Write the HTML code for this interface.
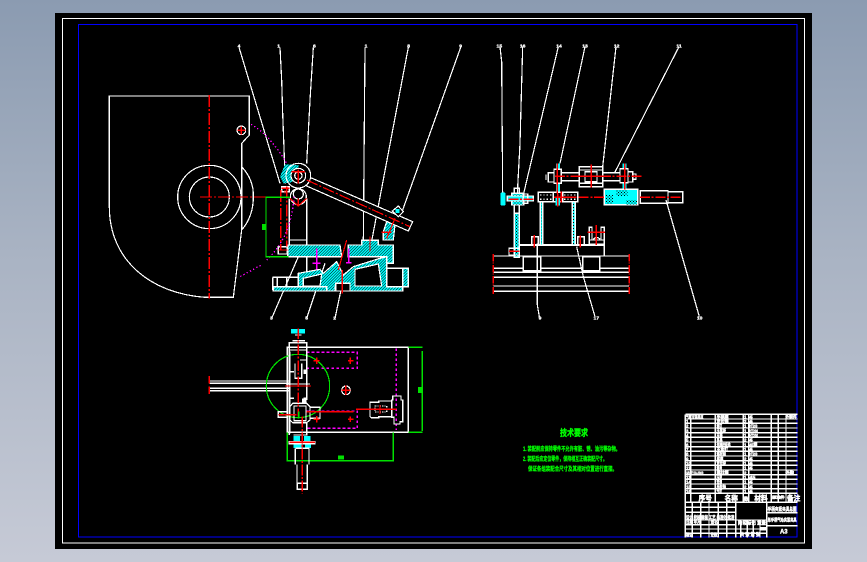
<!DOCTYPE html>
<html lang="zh"><head><meta charset="utf-8"><title>CAD</title>
<style>
html,body{margin:0;padding:0;width:867px;height:562px;overflow:hidden;background:linear-gradient(#8b9bb1,#a9b3c3 45%,#c6cad6)}
svg{position:absolute;left:0;top:0;display:block}
text{font-family:"Liberation Sans","Noto Sans CJK SC",sans-serif;font-weight:bold}
</style></head><body>
<svg width="867" height="562" viewBox="0 0 867 562" xmlns="http://www.w3.org/2000/svg" shape-rendering="crispEdges">
<defs>
<pattern id="h" width="6" height="6" patternUnits="userSpaceOnUse" patternTransform="rotate(45)"><rect width="6" height="6" fill="#00ffff"/><rect width="2" height="6" fill="#000"/></pattern>
<pattern id="d" width="9" height="9" patternUnits="userSpaceOnUse"><rect width="9" height="9" fill="#00ffff"/><rect width="3" height="3" fill="#000"/><rect x="4" y="4" width="3" height="3" fill="#000"/></pattern>
</defs>
<rect x="55" y="13" width="757" height="536" fill="#000"/>
<rect x="62.5" y="18.5" width="742" height="524.5" fill="none" stroke="#fff"/>
<rect x="78.5" y="24.5" width="718.5" height="512.5" fill="none" stroke="#0000ff"/>

<!-- Top left view -->
<g transform="translate(90 30) scale(.33333)" fill="none" stroke="#fff" stroke-width="3.6">
<path d="M58 198H478V315L455 340V600L430 802H345C180 790 58 690 58 530Z"/>
<path d="M455 410Q492 450 490 500Q490 560 455 600"/>
<circle cx="358" cy="501" r="95"/><circle cx="358" cy="501" r="60"/>
<circle cx="454" cy="301" r="13"/>
<path d="M447 52L570 460M570 52L575 150L578 250L586 460M670 52L660 210L650 400M825 52L820 630M955 52L840 660M1112 52L938 540M545 865L625 680M650 865L705 700M735 865L755 770"/>
<path d="M598 505V645M650 505V645M598 630H650M650 680V730"/>
<path fill="url(#h)" stroke="#fff" d="M593 645H750L755 680H593ZM775 645H815V631H865V645H910V700H890V680H775Z"/>
<path fill="url(#h)" stroke="#fff" d="M625 730L690 718L700 730L740 695L760 735L790 710L870 685L890 680V770H955V715H938V783H780V770H735V783H710V770H625Z"/>
<path fill="#000" d="M640 745L695 732L690 768H640ZM795 718L865 702L875 768H795Z"/>
<path d="M548 742H625M548 742V778H625M562 742V770M590 742V770"/>
<path fill="url(#h)" d="M550 770H710V783H550Z"/>
<rect x="890" y="715" width="48" height="55" fill="#000"/>
<rect x="737" y="760" width="43" height="23" fill="#000"/>
<path fill="url(#h)" d="M890 575L915 585L910 630H880V605Z"/>
<path fill="#000" d="M655 440L968 575L955 603L650 468Z"/>
<circle cx="625" cy="437" r="37" fill="#000"/>
<path fill="url(#h)" stroke="none" d="M570 440L585 403L625 405L625 445L600 458L580 460Z"/>
<circle cx="625" cy="437" r="37"/><circle cx="625" cy="437" r="22" fill="#000"/><circle cx="625" cy="437" r="11"/>
<circle cx="625" cy="500" r="24" fill="#000"/><circle cx="625" cy="492" r="15"/>
<path d="M907 543L925 528L940 545L925 560Z" fill="#000"/>
<rect x="917" y="537" width="12" height="12" fill="#00ffff" stroke="none"/>
<path d="M575 470H598V485H575ZM565 650H592V672H565Z" fill="#000"/>
<path stroke="#ff0000" stroke-dasharray="36 6 6 6" d="M358 195V805M330 501H530M650 450L960 590M572 480V660M590 470V650"/>
<path stroke="#ff0000" d="M454 290V314M442 301H466M605 425H645M625 418V460M600 505L625 528L650 505M625 505V530M575 475H598M565 660H592M840 620V665M770 630L745 720M757 720V790M915 565L890 625M875 607H905M585 480V490"/>
<path stroke="#ff00ff" stroke-width="4" stroke-dasharray="4 7" d="M483 283Q540 315 590 400M612 500Q605 620 530 690M512 706L450 740"/>
<path stroke="#ff00ff" stroke-width="5" d="M680 655V718M668 700H692M776 655V698M768 698H785"/>
<path stroke="#00e000" d="M600 502H528V680H595"/>
<rect x="516" y="582" width="14" height="18" fill="#00e000" stroke="none"/>
<g fill="#fff" stroke="#fff" stroke-width="1" font-size="15" text-anchor="middle">
<text x="447" y="53">4</text><text x="566" y="53">1</text><text x="673" y="53">6</text><text x="828" y="53">1</text><text x="956" y="53">8</text><text x="1112" y="53">9</text>
<text x="544" y="869">3</text><text x="650" y="869">5</text><text x="734" y="869">2</text>
</g>
</g>

<!-- Top right view -->
<g transform="translate(480 30) scale(.33333)" fill="none" stroke="#fff" stroke-width="3.6">
<path d="M60 50L65 95L68 490M128 50L120 340L112 490M235 50L130 495M315 50L240 400M408 50L367 420M597 50L403 430M172 640V825L178 860M290 650L310 740L345 860M558 510L658 860"/>
<path d="M40 678H447M40 715H447M40 727H447M40 742H447M40 768H447M40 784H447"/>
<rect x="130" y="680" width="52" height="42" fill="#000"/><rect x="308" y="680" width="51" height="42" fill="#000"/>
<path d="M172 680V722"/>
<path stroke-width="5" d="M118 645H373"/><path d="M373 645V680M118 645V680"/>
<rect x="103" y="550" width="15" height="132" fill="url(#d)"/>
<rect x="181" y="515" width="7" height="130" fill="url(#d)"/>
<rect x="277" y="515" width="9" height="130" fill="url(#d)"/>
<path d="M103 475H118V550H103ZM87 655H118V675H87Z"/>
<rect x="62" y="487" width="14" height="40" rx="4" fill="#00ffff" stroke="none"/>
<rect x="95" y="490" width="36" height="35" fill="url(#d)"/>
<rect x="82" y="498" width="78" height="15" fill="#00ffff"/>
<path d="M130 492H143V520H130Z"/>
<path d="M205 428H222V456H205ZM198 434V450M244 428H298M244 452H298M368 428H420M368 452H420M444 425H458V456H444ZM458 432H468V448H458Z"/>
<rect x="228" y="400" width="12" height="18" fill="#00ffff" stroke="none"/><rect x="228" y="460" width="12" height="28" fill="#00ffff" stroke="none"/>
<rect x="428" y="400" width="12" height="18" fill="#00ffff" stroke="none"/><rect x="428" y="458" width="12" height="18" fill="#00ffff" stroke="none"/>
<rect x="222" y="418" width="22" height="42" fill="#000"/><rect x="420" y="416" width="24" height="42" fill="#000"/>
<rect x="298" y="410" width="70" height="60" fill="#000"/><rect x="315" y="425" width="36" height="30"/><path d="M298 420H368M298 460H368"/>
<rect x="175" y="487" width="118" height="28" fill="#000"/>
<rect x="226" y="500" width="14" height="26" fill="#00ffff" stroke="none"/>
<path d="M220 487V515M248 487V515" stroke-width="4"/>
<path stroke-dasharray="4 6" d="M180 495H215M180 508H215M252 495H288M252 508H288"/>
<rect x="373" y="478" width="100" height="46" fill="#00ffff"/>
<rect x="408" y="480" width="34" height="20" fill="url(#d)" stroke="none"/><rect x="376" y="494" width="24" height="28" fill="url(#d)" stroke="none"/><rect x="438" y="510" width="33" height="13" fill="url(#d)" stroke="none"/>
<path stroke-width="4" d="M481 482H564V520H481Z"/><path d="M564 485H608V518H564"/>
<path d="M155 620H175V645H155ZM293 620H313V645H293ZM328 630V592H336V630M373 645V592H363V630M328 630H373V643H328ZM340 628Q350 616 360 628"/>
<path stroke="#ff0000" stroke-dasharray="30 5 6 5" d="M225 439H485M85 508H160M296 502H372M480 502H608"/>
<path stroke="#ff0000" d="M334 403V472M300 439H370M232 400V490M434 400V478M222 502H290M244 485V518M233 490V530M349 585V645M322 607H375M163 615V652M301 617V652M87 664H118"/>
<path stroke="#ff0000" stroke-dasharray="22 4 3 4" d="M40 672V792M448 672V792"/>
<g fill="#fff" stroke="#fff" stroke-width="1" font-size="15" text-anchor="middle">
<text x="58" y="53">15</text><text x="128" y="53">16</text><text x="237" y="53">14</text><text x="315" y="53">13</text><text x="410" y="53">12</text><text x="597" y="53">11</text>
<text x="180" y="868">9</text><text x="349" y="868">17</text><text x="659" y="868">10</text>
</g>
</g>

<!-- Plan view -->
<g transform="translate(200 320) scale(.33333)" fill="none" stroke="#fff" stroke-width="3.6">
<path d="M262 82H625V337H262Z"/>
<path d="M28 183H270M28 190H270M28 205H270M28 212H270"/>
<path stroke="#ff00ff" stroke-dasharray="8 7" d="M320 97H472V145H320M320 273H472V325H320M589 85V330"/>
<circle cx="294" cy="198" r="95" stroke="#00e000"/>
<path stroke="#00e000" d="M625 82H668M667 93V333M625 337H668M262 337V422H580V337"/>
<rect x="654" y="201" width="14" height="18" fill="#00e000" stroke="none"/>
<rect x="414" y="407" width="18" height="12" fill="#00e000" stroke="none"/>
<rect x="273" y="27" width="42" height="13" fill="#00ffff" stroke="none"/>
<path d="M285 45H305M278 62H315M268 68H320V90H268ZM268 90V345M320 90V140M270 95V340M285 130V175H305V130M300 120H320V240M270 155H282M310 150H320V160M255 198H333M258 192H330M268 235H282M310 235H320"/>
<rect x="310" y="150" width="10" height="12" fill="#fff" stroke="none"/><rect x="306" y="235" width="14" height="14" fill="#fff" stroke="none"/>
<path d="M278 250H320L330 260V300L320 308H278L270 300V260Z"/><path d="M282 258H318V302H282Z"/>
<path d="M330 262H360V295H330M235 275H262V292H235ZM280 308H320V345H280"/>
<rect x="280" y="348" width="20" height="16" fill="#00ffff" stroke="none"/><rect x="312" y="348" width="20" height="16" fill="#00ffff" stroke="none"/>
<rect x="280" y="370" width="24" height="14" fill="#00ffff" stroke="none"/><rect x="315" y="370" width="18" height="14" fill="#00ffff" stroke="none"/>
<path d="M268 365H345V371H268ZM286 385H327V433M286 385V433M291 433V490H322V433M292 490V508H322V490"/>
<path d="M510 247H536V243H575V290H536V293H514L510 290Z"/><path d="M525 258H560V276H525Z" stroke-dasharray="4 3"/>
<path d="M578 228H603V240H608V305H600V312H582V292H575V240H578Z"/>
<circle cx="438" cy="211" r="13"/>
<path stroke="#ff0000" stroke-dasharray="32 5 6 5" d="M295 25V290M307 290V520"/>
<path stroke="#ff0000" d="M28 168V190M28 200V222M255 198H333M268 367H345M235 284H290M320 275H460M468 268H590M540 255V282M530 268H590M340 122H358M350 113V132M444 122H460M451 113V132M340 298H358M350 288V308M444 298H460M451 290V306M424 211H452M437 196V225"/>
<path stroke="#00e000" d="M296 275V295"/>
</g>

<!-- Tech requirements -->
<g fill="#00ff00">
<text x="560" y="436" font-size="9" textLength="28" lengthAdjust="spacingAndGlyphs" stroke="#00ff00" stroke-width=".4" letter-spacing="0">技术要求</text>
<text x="523" y="451" font-size="6" textLength="97" lengthAdjust="spacingAndGlyphs" stroke="#00ff00" stroke-width=".25">1. 装配前应保持零件不允许有脏、锈、油污等杂物。</text>
<text x="523" y="461" font-size="6" textLength="84" lengthAdjust="spacingAndGlyphs" stroke="#00ff00" stroke-width=".25">2. 装配后应定位零件，保持相互正确装配尺寸。</text>
<text x="528" y="471" font-size="6" textLength="89" lengthAdjust="spacingAndGlyphs" stroke="#00ff00" stroke-width=".25">保证各组装配合尺寸及其相对位置进行直接。</text>
</g>

<!-- Title block -->
<g transform="translate(670 405) scale(.33333)" fill="none" stroke="#fff" stroke-width="3.6">
<path d="M46 28V397M46 28H382"/>
<path d="M46 42H382M46 55H382M46 69H382M46 83H382M46 97H382M46 111H382M46 125H382M46 139H382M46 153H382M46 167H382M46 181H382M46 195H382M46 209H382M46 223H382M46 237H382M46 251H382M46 265H382"/>
<path stroke-width="4" d="M46 292H382"/>
<path d="M62 28V292M136 28V292M220 28V292M236 28V292M304 28V292M325 28V292M348 28V292"/>
<path d="M46 307H197M46 322H197M46 345H290M46 359H197M46 372H290M46 385H290M67 292V397M92 292V397M117 292V397M145 292V397M170 292V397M197 292V397M290 292V397M290 323H382M290 362H382M212 345V397M232 345V397M250 345V397M270 345V397"/>
<rect x="272" y="366" width="16" height="10" fill="#fff" stroke="none"/>
<g fill="#fff" stroke="#fff" stroke-width="1.2">
<g font-size="13" lengthAdjust="spacingAndGlyphs">
<text x="48" y="41" textLength="52" lengthAdjust="spacingAndGlyphs">气缸支架总成</text><text x="140" y="41" textLength="36" lengthAdjust="spacingAndGlyphs">手柄座</text><text x="222" y="41">1</text><text x="238" y="41" textLength="10">45</text><text x="346" y="41" textLength="34" lengthAdjust="spacingAndGlyphs">外购件</text>
<text x="48" y="54">1</text><text x="140" y="54" textLength="36" lengthAdjust="spacingAndGlyphs">定位销</text><text x="222" y="54">2</text><text x="238" y="54" textLength="10">45</text>
<text x="48" y="68">2</text><text x="140" y="68" textLength="16" lengthAdjust="spacingAndGlyphs">螺钉</text><text x="222" y="68">1</text><text x="238" y="68" textLength="24" lengthAdjust="spacingAndGlyphs">HT200</text>
<text x="48" y="82">3</text><text x="140" y="82" textLength="28" lengthAdjust="spacingAndGlyphs">压紧板</text><text x="222" y="82">1</text><text x="238" y="82" textLength="26" lengthAdjust="spacingAndGlyphs">HT200</text>
<text x="48" y="96">4</text><text x="140" y="96" textLength="18" lengthAdjust="spacingAndGlyphs">支座</text><text x="222" y="96">1</text><text x="238" y="96" textLength="26" lengthAdjust="spacingAndGlyphs">HT200</text>
<text x="48" y="110">5</text><text x="140" y="110" textLength="18" lengthAdjust="spacingAndGlyphs">夹具</text><text x="222" y="110">2</text><text x="238" y="110" textLength="10">45</text>
<text x="48" y="124">6</text><text x="140" y="124" textLength="42" lengthAdjust="spacingAndGlyphs">连接杆组件</text><text x="222" y="124">1</text><text x="238" y="124" textLength="24" lengthAdjust="spacingAndGlyphs">45钢</text>
<text x="48" y="138">7</text><text x="140" y="138" textLength="34" lengthAdjust="spacingAndGlyphs">支承钉</text><text x="222" y="138">1</text><text x="238" y="138" textLength="10">45</text>
<text x="48" y="152">8</text><text x="140" y="152" textLength="28" lengthAdjust="spacingAndGlyphs">螺栓组</text><text x="222" y="152">1</text><text x="238" y="152" textLength="24" lengthAdjust="spacingAndGlyphs">HT200</text>
<text x="48" y="166">9</text><text x="140" y="166" textLength="20" lengthAdjust="spacingAndGlyphs">底座</text><text x="222" y="166">2</text><text x="238" y="166" textLength="10">45</text>
<text x="48" y="180">10</text><text x="140" y="180" textLength="28" lengthAdjust="spacingAndGlyphs">定位块</text><text x="222" y="180">1</text><text x="238" y="180" textLength="10">45</text>
<text x="48" y="194">11</text><text x="140" y="194" textLength="16" lengthAdjust="spacingAndGlyphs">螺母</text><text x="222" y="194">1</text><text x="238" y="194" textLength="10">45</text>
<text x="48" y="208" textLength="52" lengthAdjust="spacingAndGlyphs">GB/T119-2000</text><text x="140" y="208" textLength="36" lengthAdjust="spacingAndGlyphs">圆柱销</text><text x="222" y="208">2</text><text x="346" y="208" textLength="26" lengthAdjust="spacingAndGlyphs">外购</text>
<text x="48" y="222">13</text><text x="140" y="222" textLength="16" lengthAdjust="spacingAndGlyphs">压块</text><text x="222" y="222">1</text><text x="238" y="222" textLength="18" lengthAdjust="spacingAndGlyphs">45</text>
<text x="48" y="236">14</text><text x="140" y="236" textLength="16" lengthAdjust="spacingAndGlyphs">垫圈</text><text x="222" y="236">1</text><text x="238" y="236" textLength="10">45</text>
<text x="48" y="250">15</text><text x="140" y="250" textLength="28" lengthAdjust="spacingAndGlyphs">手轮轴</text><text x="222" y="250">2</text><text x="238" y="250" textLength="10">45</text>
<text x="48" y="264">16</text><text x="140" y="264" textLength="16" lengthAdjust="spacingAndGlyphs">气缸</text><text x="222" y="264">1</text><text x="238" y="264" textLength="10">45</text>
</g>
<g font-size="20" stroke-width="1.5">
<text x="86" y="286">序号</text><text x="164" y="286">名称</text><text x="222" y="286" font-size="14">数</text><text x="253" y="286">材料</text><text x="306" y="280" font-size="11" textLength="38" lengthAdjust="spacingAndGlyphs">标准件</text><text x="351" y="286">备注</text>
</g>
<g font-size="13">
<text x="48" y="342" textLength="145" lengthAdjust="spacingAndGlyphs">设计 校核 审核 工艺 标准化 批准</text>
<text x="48" y="356" textLength="44" lengthAdjust="spacingAndGlyphs">日期 年月</text><text x="122" y="356" textLength="22" lengthAdjust="spacingAndGlyphs">签名</text>
<text x="204" y="358" textLength="84" lengthAdjust="spacingAndGlyphs">阶段标记 重量</text>
<text x="210" y="393" textLength="60" lengthAdjust="spacingAndGlyphs">共 张 第 张</text>
<text x="48" y="394" textLength="20" lengthAdjust="spacingAndGlyphs">标记</text><text x="122" y="394" textLength="20" lengthAdjust="spacingAndGlyphs">处数</text>
<text x="293" y="318" textLength="87" font-size="16" lengthAdjust="spacingAndGlyphs">手柄夹紧夹具总图</text>
<text x="293" y="350" textLength="87" font-size="14" lengthAdjust="spacingAndGlyphs">单手柄气动夹紧夹具</text>
</g>
<text x="330" y="386" font-size="18">A3</text>
</g>
</g>
</svg>
</body></html>
